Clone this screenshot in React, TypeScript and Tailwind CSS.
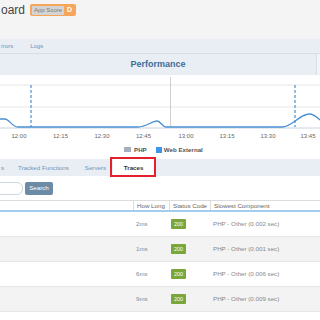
import React from "react";

const rows = [
  { ms: "2ms", comp: "PHP - Other (0.002 sec)" },
  { ms: "1ms", comp: "PHP - Other (0.001 sec)" },
  { ms: "6ms", comp: "PHP - Other (0.006 sec)" },
  { ms: "9ms", comp: "PHP - Other (0.009 sec)" },
];

const ticks = [
  { x: 19, t: "12:00" },
  { x: 60.5, t: "12:15" },
  { x: 102, t: "12:30" },
  { x: 143.5, t: "12:45" },
  { x: 186, t: "13:00" },
  { x: 227, t: "13:15" },
  { x: 268, t: "13:30" },
  { x: 308, t: "13:45" },
];

function Chart() {
  return (
    <svg width="320" height="65" viewBox="0 0 320 65" className="block">
      <line x1="0" y1="10" x2="320" y2="10" stroke="#e6e6e6" strokeWidth="1" />
      <line x1="0" y1="32" x2="320" y2="32" stroke="#e6e6e6" strokeWidth="1" />
      <line x1="170.5" y1="2" x2="170.5" y2="52" stroke="#d0d0d0" strokeWidth="1" />
      <line x1="31" y1="10" x2="31" y2="52" stroke="#4a8fd0" strokeWidth="1.2" strokeDasharray="3 2" />
      <line x1="295" y1="10" x2="295" y2="52" stroke="#4a8fd0" strokeWidth="1.2" strokeDasharray="3 2" />
      <line x1="0" y1="53" x2="320" y2="53" stroke="#c8d4e0" strokeWidth="1" />
      <path
        d="M0,44 L5,44 C9,44 12,52 18,52 L138,52 C146,52 152,46 157,46 C161,46 162,52 166,52 L282,52 C292,52 300,39 309,39 C314,39 318,43 320,45"
        fill="none"
        stroke="#4a90d4"
        strokeWidth="1.3"
      />
      {ticks.map((k) => (
        <text
          key={k.t}
          x={k.x}
          y="63"
          textAnchor="middle"
          fontSize="6"
          fill="#666"
          fontFamily="Liberation Sans, Arial, sans-serif"
        >
          {k.t}
        </text>
      ))}
    </svg>
  );
}

export default function App() {
  return (
    <div className="w-[320px] h-[320px] overflow-hidden bg-[#f4f4f4] font-['Liberation_Sans',Arial,sans-serif] text-[6px] text-[#666]">
      {/* page title, cut at the left edge */}
      <div className="h-[39px] flex items-start pt-[3px]">
        <div className="ml-[1px] text-[12px] leading-[14px] text-[#444]">oard</div>
        <div className="ml-[5px] mt-[1px] h-[12px] flex items-center bg-[#f5a65b] rounded-[2px] pl-[2px] pr-[4px]">
          <div className="h-[9px] px-[2px] bg-[#d4d4d4] text-[#777] leading-[9px] rounded-[1px]">App Score</div>
          <div className="ml-[3px] text-white font-bold text-[7px]">D</div>
        </div>
      </div>

      {/* main tabs */}
      <div className="h-[15px] bg-[#e9edf4] border-b border-[#d9dee6] flex items-center text-[#6f95b8]">
        <span className="ml-[1px]">rrors</span>
        <span className="ml-[17px]">Logs</span>
      </div>

      {/* performance */}
      <div className="w-[317px] h-[21px] bg-[#e9edf4] border-r border-[#d9dee6] flex items-center justify-center text-[9px] font-bold text-[#3e6d96]">
        Performance
      </div>
      <div className="bg-white">
        <Chart />
        <div className="h-[19px] flex items-center pl-[124px] font-bold text-[#555] text-[6.2px]">
          <span className="w-[7px] h-[5px] bg-[#a7afbd]" />
          <span className="ml-[3px]">PHP</span>
          <span className="ml-[9px] w-[6px] h-[6px] bg-[#3d95e6]" />
          <span className="ml-[2px]">Web External</span>
        </div>
      </div>

      {/* sub tabs */}
      <div className="h-[17px] bg-[#e9edf4] flex items-center text-[#6f95b8] text-[6.2px]">
        <span className="ml-[1px]">s</span>
        <span className="ml-[14px]">Tracked Functions</span>
        <span className="ml-[16px]">Servers</span>
        <div className="relative ml-[7px] h-[17px] w-[41px] bg-white flex items-center justify-center font-bold text-[#333]">
          Traces
          <div className="absolute left-[-3px] top-[-2px] w-[46px] h-[20px] border-2 border-[#e3202b]" />
        </div>
      </div>

      {/* search */}
      <div className="h-[24px] bg-white flex items-center">
        <div className="ml-[-37px] w-[60px] h-[13px] border border-[#cfd6de] rounded-[6px] bg-white" />
        <div className="ml-[2px] w-[28px] h-[13px] bg-[#6b8ba6] rounded-[2px] text-white flex items-center justify-center text-[6.2px]">
          Search
        </div>
      </div>

      {/* table */}
      <div className="bg-white h-full">
        <div className="grid grid-cols-[133px_36px_41px_1fr] h-[12px] border-t border-[#dcdcdc] border-b-2 border-b-[#a3cdee] items-stretch text-[#666] text-[6.2px]">
          <div />
          <div className="border-l border-[#dcdcdc] pl-[3px] flex items-center">How Long</div>
          <div className="border-l border-[#dcdcdc] pl-[3px] flex items-center whitespace-nowrap">Status Code</div>
          <div className="border-l border-[#dcdcdc] pl-[3px] flex items-center">Slowest Component</div>
        </div>
        {rows.map((r, i) => (
          <div
            key={i}
            className={`grid grid-cols-[133px_36px_41px_1fr] h-[25px] items-center border-b border-[#e6e6e6] text-[#888] text-[6.2px] ${
              i % 2 === 1 ? "bg-[#f3f3f3]" : "bg-white"
            }`}
          >
            <div />
            <div className="pl-[3px]">{r.ms}</div>
            <div className="pl-[2px]">
              <span className="inline-flex items-center justify-center w-[15px] h-[10px] bg-[#7ba63a] text-white rounded-[1px] text-[5.5px]">
                200
              </span>
            </div>
            <div className="pl-[3px]">{r.comp}</div>
          </div>
        ))}
      </div>
    </div>
  );
}
